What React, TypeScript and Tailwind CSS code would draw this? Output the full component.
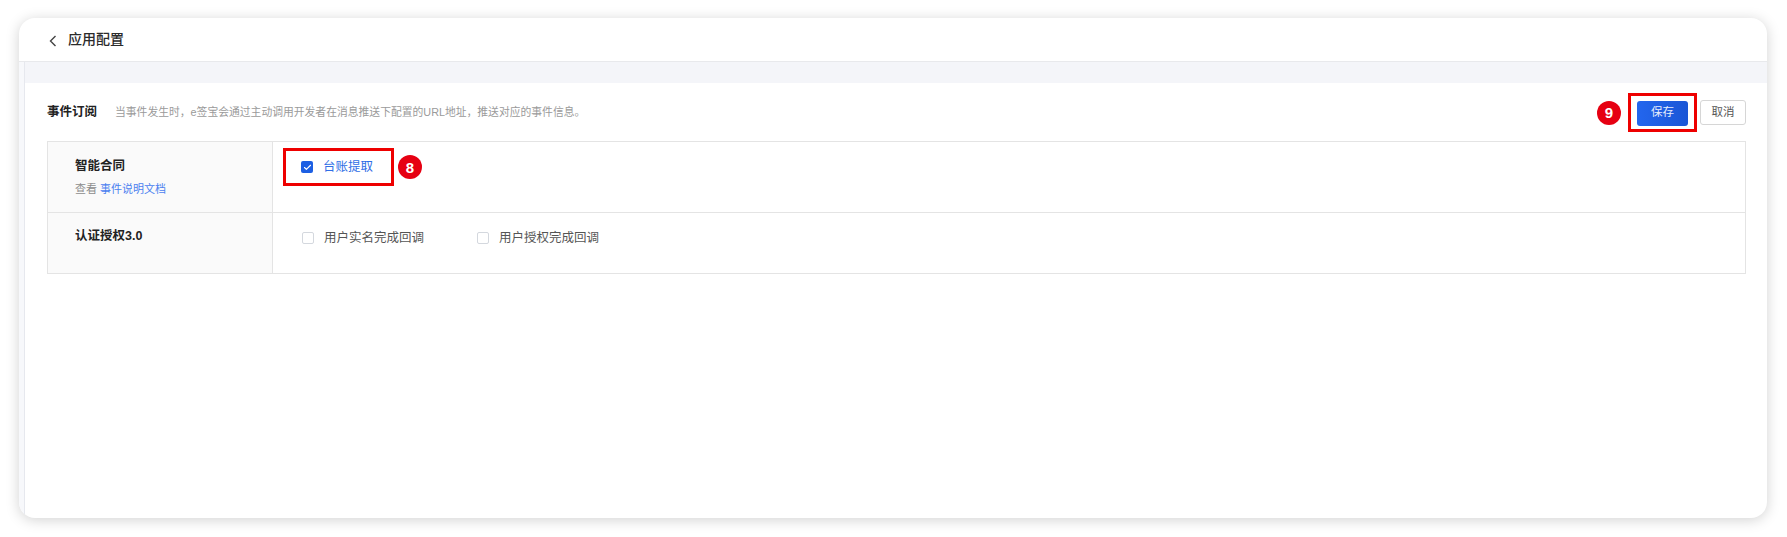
import { Check } from "lucide-react";

const FONT = { fontFamily: '"Liberation Sans", "Noto Sans CJK SC", sans-serif' };

// Red numbered marker used to annotate steps
function StepBadge({ n }: { n: number }) {
  return (
    <span className="flex h-[24px] w-[24px] shrink-0 items-center justify-center rounded-full bg-[#e60012] text-[15px] font-bold leading-none text-white">
      {n}
    </span>
  );
}

function Box({ checked }: { checked?: boolean }) {
  return checked ? (
    <span className="flex h-[12px] w-[12px] items-center justify-center rounded-[2px] bg-[#1d5fe3]">
      <Check className="h-[9px] w-[9px] text-white" strokeWidth={3} />
    </span>
  ) : (
    <span className="h-[12px] w-[12px] rounded-[2px] border border-[#d4d8de] bg-white" />
  );
}

export default function App() {
  return (
    <div style={FONT} className="h-[537px] w-full bg-white pb-[19px] pl-[19px] pr-[20px] pt-[18px]">
      <div className="flex h-full flex-col overflow-hidden rounded-[16px] bg-white shadow-[0_2px_14px_rgba(0,0,0,0.18)]">
        {/* ── Header ── */}
        <div className="flex h-[44px] shrink-0 items-center gap-[11px] border-b border-[#e8e9ec] pl-[30px]">
          <svg width="8" height="12" viewBox="0 0 8 12" className="mt-[3px]">
            <path d="M6.5 1L1.5 6L6.5 11" fill="none" stroke="#444" strokeWidth="1.4" />
          </svg>
          <span className="text-[14px] font-medium text-[#2b2b2b]">应用配置</span>
        </div>

        <div className="flex flex-1">
          <div className="w-[6px] shrink-0 border-r border-[#e6e8ee] bg-[#f7f8fb]" />
          <div className="flex flex-1 flex-col">
            <div className="h-[21px] bg-[#f4f5f9]" />

            <div className="pl-[22px] pr-[21px] pt-[17px]">
              {/* ── Section title + actions ── */}
              <div className="flex h-[25px] items-center">
                <span className="text-[12.5px] font-bold text-[#222]">事件订阅</span>
                <span className="ml-[18px] text-[10.8px] text-[#9a9a9a]">
                  当事件发生时，e签宝会通过主动调用开发者在消息推送下配置的URL地址，推送对应的事件信息。
                </span>
                <div className="ml-auto flex items-center">
                  <StepBadge n={9} />
                  <div className="relative ml-[16px]">
                    <button className="h-[25px] w-[51px] rounded-[3px] bg-gradient-to-r from-[#2366ee] to-[#1a56d6] text-[11.5px] text-[#e6edfc]">
                      保存
                    </button>
                    <span className="pointer-events-none absolute -bottom-[6px] -left-[9px] -right-[9px] -top-[6px] border-[3px] border-[#ee0000]" />
                  </div>
                  <button className="ml-[12px] h-[25px] w-[46px] rounded-[3px] border border-[#d6d6d6] bg-white text-[11.5px] text-[#555]">
                    取消
                  </button>
                </div>
              </div>

              {/* ── Event table ── */}
              <div className="mt-[16px] border border-[#e4e4e4]">
                <div className="flex h-[71px] border-b border-[#e4e4e4]">
                  <div className="w-[225px] shrink-0 border-r border-[#e4e4e4] bg-[#fafafa] pl-[27px] pt-[15px]">
                    <div className="text-[12.5px] font-bold leading-[18px] text-[#222]">智能合同</div>
                    <div className="mt-[6px] text-[11px] leading-[16px] text-[#8c8c8c]">
                      查看 <span className="text-[#4b7ff0]">事件说明文档</span>
                    </div>
                  </div>
                  <div className="flex items-start pl-[28px] pt-[16px]">
                    <div className="relative flex items-center gap-[10px] leading-[18px]">
                      <Box checked />
                      <span className="text-[12.5px] text-[#2f6ee6]">台账提取</span>
                      <span className="pointer-events-none absolute -bottom-[10px] -left-[18px] -right-[21px] -top-[10px] border-[3px] border-[#ee0000]" />
                    </div>
                    <span className="-mt-[3px] ml-[25px]">
                      <StepBadge n={8} />
                    </span>
                  </div>
                </div>
                <div className="flex h-[60px]">
                  <div className="w-[225px] shrink-0 border-r border-[#e4e4e4] bg-[#fafafa] pl-[27px] pt-[14px]">
                    <div className="text-[12.5px] font-bold leading-[18px] text-[#222]">认证授权3.0</div>
                  </div>
                  <div className="flex items-start gap-[53px] pl-[29px] pt-[16px]">
                    <label className="flex items-center gap-[10px] leading-[18px]">
                      <Box />
                      <span className="text-[12.5px] text-[#555]">用户实名完成回调</span>
                    </label>
                    <label className="flex items-center gap-[10px] leading-[18px]">
                      <Box />
                      <span className="text-[12.5px] text-[#555]">用户授权完成回调</span>
                    </label>
                  </div>
                </div>
              </div>
            </div>
          </div>
        </div>
      </div>
    </div>
  );
}
